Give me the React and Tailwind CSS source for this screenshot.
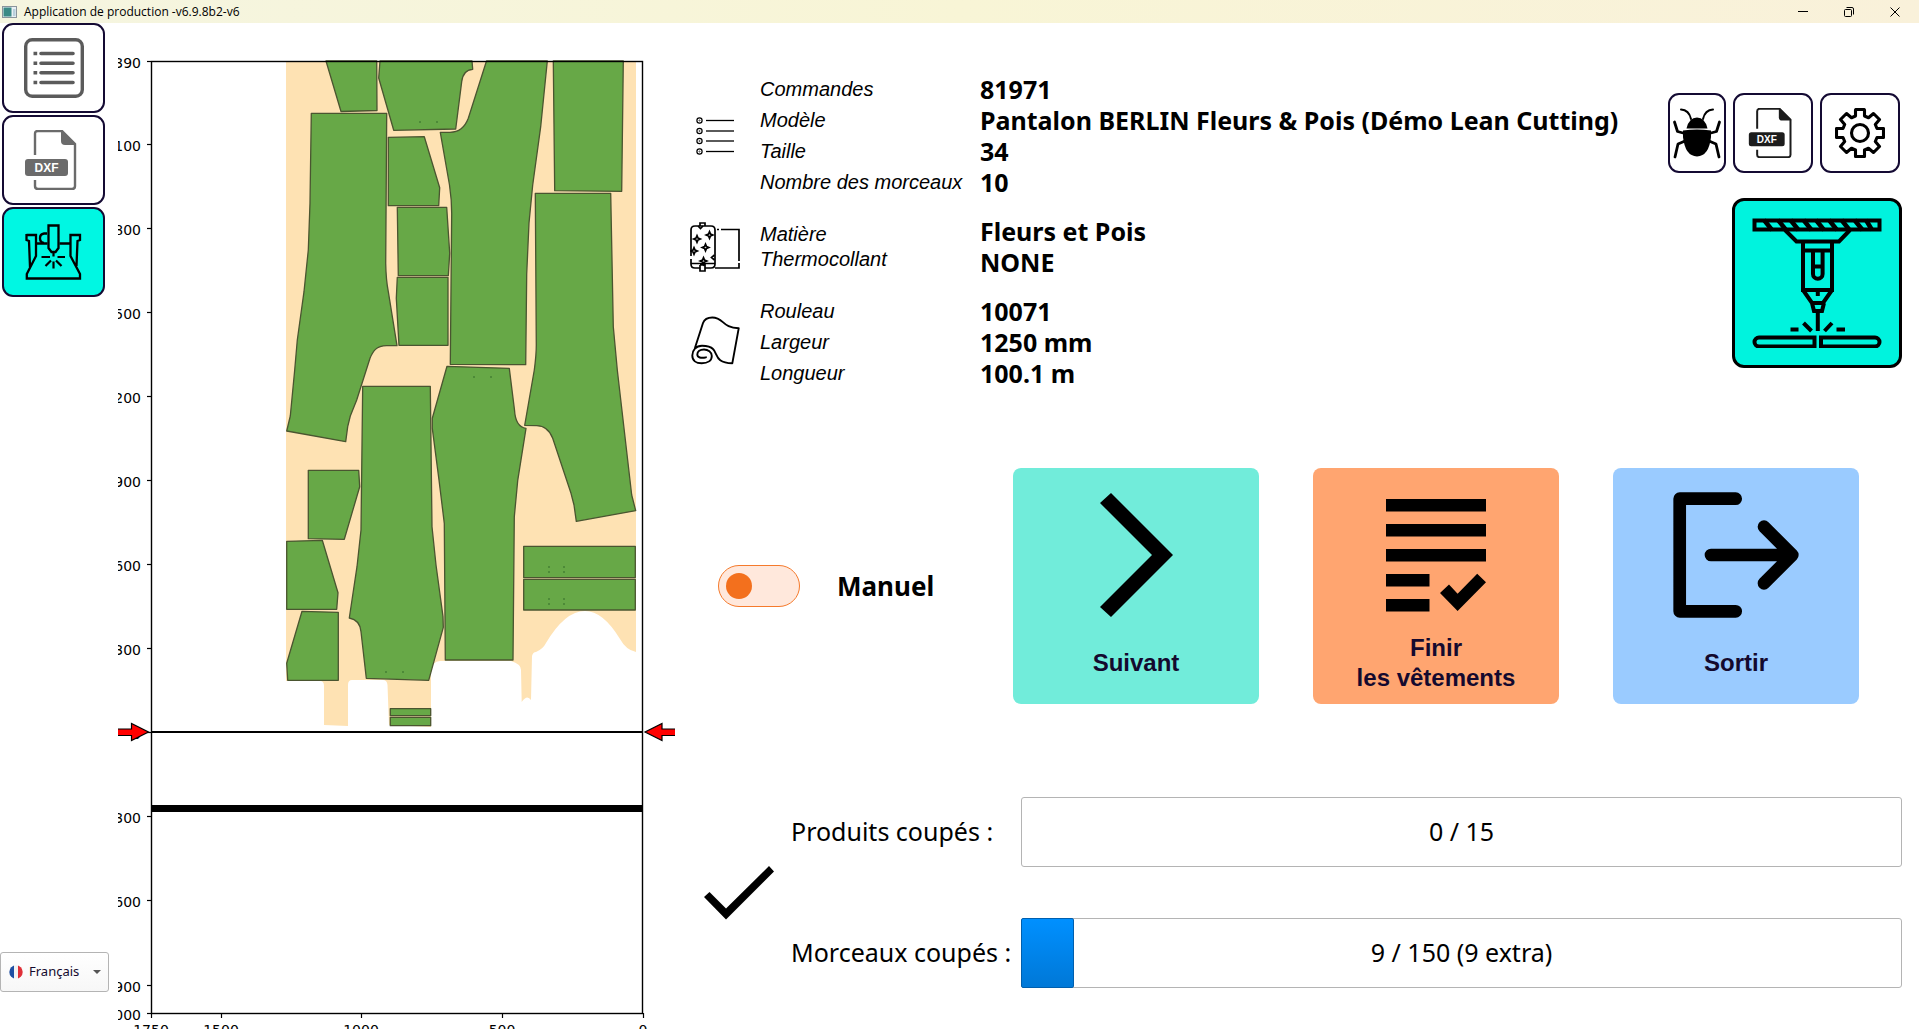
const yTicks = [
  [61, "2390"],
  [144, "2100"],
  [228, "1800"],
  [312, "1500"],
  [396, "1200"],
  [480, "900"],
  [564, "600"],
  [648, "300"],
  [732, "0"],
  [816, "-300"],
  [900, "-600"],
  [985, "-900"],
  [1013, "-1000"],
];

const xTicks = [
  [151, "1750"],
  [221, "1500"],
  [361, "1000"],
  [502, "500"],
  [643, "0"],
];

const pieces = [
  "M326 61L341 111.5L377 110.5L376.7 61Z",
  "M380 61L378.7 78L393.7 130.3L455.7 129L461.7 81.7Q463 70 472.7 69.3L472 61Z",
  "M486.5 61L468.3 118.3Q463 132.3 450 132.3H440.3L449.5 185Q451.7 200 451.7 213.3L450.3 364.3L525.7 364.7L526.7 274L529 223L532.7 185L540.7 126.7L547.3 61Z",
  "M553.3 61L554.7 190.7L621.7 191.3L623.3 61Z",
  "M311.3 113.3H386.7L385.7 263.3Q386 280 388.3 291.7L397 345.7H386.7C376 346 373 351 370 358.3L356.7 400L350.3 416L347.7 426.7L345.7 441.7L286.7 431L290.3 416L294.7 370L297.3 340L304 291.7L308.3 250L310 203Z",
  "M388.3 137.3L424.3 136.7L439.7 187.7L438.7 205.7H388.3Z",
  "M397.3 207.3H446.7L449.7 253.3L448.3 275.7H398.3Z",
  "M397.3 277.3H448V345.3H399L396.3 298.3Z",
  "M535.3 193.3H610.7L613.3 326.7L617.3 370L631.7 495L635.7 510.7L576.3 521.3L574 505L571 493.3L552.7 438.3Q548 426 536.7 425.7L524.7 425.3L534.3 370Q536.3 355 536.3 345Z",
  "M362.7 386.3H430.3L432 526.7L436 565L443 616.7L443.3 627.3L428.7 680.3L366.3 678.3L361 631.7Q360 620 349.3 618L357 566.7L361 530Z",
  "M447 366.3L509.3 368.3L514.5 410Q515.5 427 526 428.3L517.7 480.7L514.3 516.7L513 660H445.3L444.3 523.3L439 480L432.3 428.3V418.3Z",
  "M308.3 470.3H358.7L359.7 486.7L344.3 539.3L308.3 538.7Z",
  "M286.7 541.3L322.3 540.3L338 592.7L336.7 609.3H286.7Z",
  "M302 611.3L338.3 612.3V680.3H287.7L286.7 663.3Z",
  "M523.7 546.3H635.3V577.7H523.7Z",
  "M523.7 579.3H635.3V610H523.7Z",
  "M390.3 708.7H430.7V715.7H390.3Z",
  "M390.3 717.3H430.7V725.7H390.3Z",
];

const marks = [
  [419, 121], [436, 121], [473, 376], [490, 376], [385, 671], [402, 671],
  [548, 566], [563, 566], [548, 571], [563, 571],
  [548, 598], [563, 598], [548, 603], [563, 603],
];

function CuttingChart() {
  return (
    <svg
      viewBox="118 23 559 1006"
      className="w-[559px] shrink-0 self-start overflow-hidden"
      role="img"
      aria-label="Plan de coupe"
    >
      <path
        fill="#fee2b3"
        d="M286 61V681H320Q324 681 324 686V725L348 726V685Q348 680 352 680H383Q387 680 387.500 685L389 725L431 727V672Q432 661 440 661H511Q521 664 521 670L521.700 702Q527 694 531 700L532 656Q533 652 536 652Q543 649 546 643Q565 611 585 611Q603 611 620 639Q626 650 636 652V61Z"
      />
      <g fill="#67a847" stroke="#4a5530" strokeWidth="1.300" strokeLinejoin="round">
        {pieces.map((d) => (
          <path key={d} d={d} />
        ))}
      </g>
      <g fill="#4d8a38">
        {marks.map(([x, y]) => (
          <rect key={`${x}-${y}`} x={x} y={y} width="2" height="2" />
        ))}
      </g>
      <rect x="151.500" y="61.500" width="491" height="952" fill="none" stroke="#000" strokeWidth="1.400" />
      <path d="M151 732H643" stroke="#000" strokeWidth="2" />
      <path d="M151 808.500H643" stroke="#000" strokeWidth="7" />
      <g fontFamily='"DejaVu Sans", sans-serif' fontSize="14">
        {yTicks.map(([y, label]) => (
          <g key={label}>
            <path d={`M147 ${y + 0.5}H151`} stroke="#000" strokeWidth="1.200" />
            <text x="141" y={y + 7} textAnchor="end">{label}</text>
          </g>
        ))}
        {xTicks.map(([x, label]) => (
          <g key={label}>
            <path d={`M${x + 0.5} 1013V1018`} stroke="#000" strokeWidth="1.200" />
            <text x={x} y="1035" textAnchor="middle">{label}</text>
          </g>
        ))}
      </g>
      <g fill="#f00" stroke="#000" strokeWidth="1.200">
        <path d="M116 729H131.500V723.500L148.500 732L131.500 740.500V735.500H116Z" />
        <path d="M675 729H662V723.500L645 732L662 740.500V735.500H675" />
      </g>
    </svg>
  );
}

function DxfIcon({ color, className }) {
  return (
    <svg viewBox="0 0 60 60" className={className} aria-hidden="true">
      <path d="M11 25V4Q11 1 14 1H38L51 14V56Q51 59 48 59H14Q11 59 11 56V50" fill="none" stroke={color} strokeWidth="2.400" />
      <path d="M37 0V11Q37 15 41 15H52Z" fill={color} />
      <rect x="1" y="29" width="43" height="17" rx="3" fill={color} />
      <text x="22.500" y="41.500" textAnchor="middle" fontSize="12" fontWeight="700" fontFamily='"Liberation Sans", sans-serif' fill="#fff">DXF</text>
    </svg>
  );
}

function ListDocIcon() {
  return (
    <svg viewBox="0 0 60 60" className="size-[60px]" fill="none" stroke="#5b5b5b" aria-hidden="true">
      <rect x="1.700" y="1.700" width="56.600" height="56.600" rx="6.500" strokeWidth="3.400" />
      <path d="M17 15.500H49M17 25.200H49M17 34.800H49M17 44.500H49" strokeWidth="3.600" strokeLinecap="round" />
      <path d="M9.500 15.500H13.200M9.500 25.200H13.200M9.500 34.800H13.200M9.500 44.500H13.200" strokeWidth="3.600" />
    </svg>
  );
}

function CutterTableIcon() {
  return (
    <svg viewBox="0 0 60 60" className="size-[60px]" fill="none" stroke="#000" strokeWidth="2.300" aria-hidden="true">
      <path d="M2.500 13H12V34L2.800 52V56.500H56V52L46.500 34V13H56V18L53.500 19L52.500 44M2.500 12V18L5 19L6 45" />
      <path d="M12 21.500H23.500M35.500 21.500H46.500" />
      <path d="M24.500 3.500H34.500V26L31.500 30H27.500L24.500 26ZM23 11.500H20A4.700 4.700 0 0 0 20 20.800" />
      <path d="M29.500 30V34.500M17.500 35H26M33.500 35H41M29.500 39.500V46.500M21.500 44L27 38.500M32 38.500L37.500 44" strokeWidth="2.200" />
    </svg>
  );
}

function BugIcon() {
  return (
    <svg viewBox="0 0 50 52" className="h-[52px] w-[50px]" fill="none" stroke="#000" strokeWidth="2.800" strokeLinecap="round" strokeLinejoin="round" aria-hidden="true">
      <path d="M9 2.500Q17 3 19 12M41 2.500Q33 3 31 12" strokeWidth="2" />
      <path d="M2.500 15L5.500 24.500L13 26.500M47.500 15L44.500 24.500L37 26.500M3 50L6 37L13 34M47 50L44 37L37 34" />
      <path d="M14.500 21.500Q17 10.500 25 10.500Q33 10.500 35.500 21.500Z" fill="#000" stroke="none" />
      <path d="M11 23.500Q25 21.500 39 23.500V30Q37 49 25 49.500Q13 49 11 30Z" fill="#000" stroke="none" />
    </svg>
  );
}

function GearIcon() {
  return (
    <svg viewBox="0 0 50 50" className="size-[50px]" fill="none" stroke="#000" strokeWidth="3.100" strokeLinejoin="round" aria-hidden="true">
      <circle cx="25" cy="25" r="8.500" />
      <path d="M20.500 2Q20.500 1.500 21 1.500H29Q29.500 1.500 29.500 2V8L33.500 9.700L38.500 5.500L44.500 11.500L40.300 16.500L42 20.500H48.500V29.500H42L40.300 33.500L44.500 38.500L38.500 44.500L33.500 40.300L29.500 42V48.500H20.500V42L16.500 40.300L11.500 44.500L5.500 38.500L9.700 33.500L8 29.500H1.500V20.500H8L9.700 16.500L5.500 11.500L11.500 5.500L16.500 9.700L20.500 8Z" />
    </svg>
  );
}

function LaserIcon() {
  return (
    <svg viewBox="0 0 130 130" className="size-[130px]" fill="none" stroke="#000" strokeWidth="4" aria-hidden="true">
      <rect x="2.500" y="2.500" width="125" height="9" />
      <path d="M12 2L20 12M26 2L34 12M38.500 2L46.500 12M51.500 2L59.500 12M64 2L72 12M77 2L85 12M89.500 2L97.500 12M102.500 2L110.500 12M114 2L120 12" strokeWidth="4.500" />
      <path d="M33 12L44.500 23.500H87L98 12M51 24V72H80V24M51 32.500H80" />
      <path d="M61 33V56A4.800 4.800 0 0 0 70.600 56V33M61 48.500H70.600M65.800 72V78M51 72L60 85H71L80 72M60 85L62 93H70L72 85M65.800 93V113" />
      <path d="M38.500 111.500H46.500M84.500 111.500H93M51.500 105L59.500 113M80 105L72.500 113" />
      <path d="M62.500 119.500H7A4.500 4.500 0 0 0 7 128.500H62.500ZM69 119.500H123A4.500 4.500 0 0 1 123 128.500H69Z" />
    </svg>
  );
}

function ListIcon() {
  return (
    <svg viewBox="0 0 50 50" className="size-[50px]" fill="none" stroke="#000" aria-hidden="true">
      {[9.5, 20, 30, 40.5].map((y) => (
        <g key={y}>
          <circle cx="9.500" cy={y} r="2.600" strokeWidth="1.200" />
          <circle cx="9.500" cy={y} r="0.600" strokeWidth="0.600" />
          <path d={`M16 ${y}H44`} strokeWidth="1.300" />
        </g>
      ))}
    </svg>
  );
}

function FabricIcon() {
  const stars = [[7, 17], [19.5, 13], [15.5, 25.5], [4, 29], [13.5, 39]];
  return (
    <svg viewBox="0 0 50 50" className="size-[50px]" fill="none" stroke="#000" strokeWidth="1.700" aria-hidden="true">
      <path d="M10 4V1H15V4M10 43V49H15V43H10M1 34V8Q1 4 5 4H21Q25 4 25 8V42Q25 46 21 46H15M10 46H5Q1 46 1 42V37M1 41.500H25" />
      <path d="M27 7.500H29M31 7.500H49V39M49 41V46H25" />
      {stars.map(([x, y]) => (
        <path key={y} d={`M${x} ${y - 3.3}L${x + 1} ${y - 1}L${x + 3.3} ${y}L${x + 1} ${y + 1}L${x} ${y + 3.3}L${x - 1} ${y + 1}L${x - 3.3} ${y}L${x - 1} ${y - 1}Z`} />
      ))}
      <path d="M24.500 33L21.500 35.500L24.500 38M8 4L10.500 6.500L13 4" />
    </svg>
  );
}

function RollIcon() {
  return (
    <svg viewBox="0 0 50 50" className="size-[50px] overflow-visible" fill="none" stroke="#000" strokeWidth="1.900" strokeLinejoin="round" strokeLinecap="round" aria-hidden="true">
      <path d="M5 29.700L13 5Q15 -0.500 22.300 -0.500C34 -0.500 32 10 48.700 10.300L42.300 45.300C25 45 28 36 23 31Q20 27.700 12 27.700C6 27.700 2.300 32 2.300 37.500C2.300 42.500 6 45.300 11.700 45.300C18 45.300 21.800 42.500 21.800 38C21.800 34 18 31.500 14 31.500C10 31.500 7.300 33.500 7.300 36.500C7.300 39.500 11 40.500 16 39.300" />
    </svg>
  );
}

function ChevronIcon() {
  return (
    <svg viewBox="0 0 126 126" className="size-[126px]" aria-hidden="true">
      <path d="M38 1L100 63L38 125L27 115L79 63L27 11Z" />
    </svg>
  );
}

function FinishIcon() {
  return (
    <svg viewBox="0 0 126 126" className="size-[126px]" aria-hidden="true">
      <path d="M13 7H113V19.500H13ZM13 32H113V44.500H13ZM13 57H113V69.500H13ZM13 82H56.500V94.500H13ZM13 107H56.500V119.500H13Z" />
      <path d="M67 101L76 92.500L84.600 101.700L104.200 81.700L113 90.300L84.600 119Z" />
    </svg>
  );
}

function ExitIcon() {
  return (
    <svg viewBox="0 0 126 126" className="size-[126px]" fill="none" stroke="#000" strokeWidth="12.700" strokeLinecap="round" strokeLinejoin="round" aria-hidden="true">
      <path d="M62.700 6.700H6.700V119.300H62.700M38 63H119M91 34.700L119.300 63L91 91.300" />
    </svg>
  );
}

function TitleBar() {
  return (
    <header className="flex h-[23px] shrink-0 items-center bg-linear-to-r from-[#f5f5e0] via-[#f8f5d6] to-[#f9f1da] pr-px pl-[2px]">
      <svg viewBox="0 0 15 12" className="h-3 w-[15px]" aria-hidden="true">
        <rect x="0.500" y="0.500" width="14" height="11" fill="#e8f0f4" stroke="#8a949c" />
        <rect x="1.500" y="1.500" width="8" height="9" fill="#3a8a86" />
        <rect x="11" y="3" width="2.500" height="7" fill="#b9d0dc" />
      </svg>
      <h1 className='ml-[7px] font-["Open_Sans",sans-serif] text-xs leading-[23px] text-black'>Application de production -v6.9.8b2-v6</h1>
      <div className="ml-auto flex h-full">
        <button type="button" aria-label="Réduire" className="flex h-full w-[46px] items-center justify-center">
          <svg viewBox="0 0 10 10" className="size-2.5" stroke="#000" fill="none"><path d="M0 4.500H10" /></svg>
        </button>
        <button type="button" aria-label="Restaurer" className="flex h-full w-[46px] items-center justify-center">
          <svg viewBox="0 0 10 10" className="size-2.5" stroke="#000" fill="none"><rect x="0.500" y="2.500" width="7" height="7" rx="1" /><path d="M2.500 0.500H8Q9.500 0.500 9.500 2V7.500" /></svg>
        </button>
        <button type="button" aria-label="Fermer" className="flex h-full w-[46px] items-center justify-center">
          <svg viewBox="0 0 10 10" className="size-2.5" stroke="#000" fill="none"><path d="M0.500 0.500L9.500 9.500M9.500 0.500L0.500 9.500" /></svg>
        </button>
      </div>
    </header>
  );
}

function Sidebar() {
  const base = "flex h-[90px] w-[103px] items-center justify-center rounded-[11px] border-2 border-[#140a33]";
  return (
    <aside className="flex w-[118px] shrink-0 flex-col justify-between pb-[37px]">
      <nav className="flex flex-col gap-[2px] pl-[2px]">
        <button type="button" aria-label="Commandes" className={base}><ListDocIcon /></button>
        <button type="button" aria-label="Fichiers DXF" className={base}><DxfIcon color="#6b6b6b" className="size-[60px]" /></button>
        <button type="button" aria-label="Découpe" className={`${base} bg-[#00f7e3]`}><CutterTableIcon /></button>
      </nav>
      <div className="relative w-[109px]">
        <svg viewBox="0 0 14 14" className="pointer-events-none absolute top-[13px] left-[9px] size-3.5" aria-hidden="true">
          <clipPath id="flag"><circle cx="7" cy="7" r="6.700" /></clipPath>
          <g clipPath="url(#flag)">
            <rect width="14" height="14" fill="#f3f3f3" />
            <rect width="5" height="14" fill="#1f4fa3" />
            <rect x="9" width="5" height="14" fill="#e03038" />
          </g>
        </svg>
        <select aria-label="Langue" className='h-10 w-full appearance-none rounded-[3px] border border-[#b4b4b4] bg-linear-to-b from-white to-[#f7f7f7] pl-7 font-["Noto_Sans",sans-serif] text-[13px] text-[#14092e]'>
          <option>Français</option>
        </select>
        <svg viewBox="0 0 8 4" className="pointer-events-none absolute top-[18px] right-[8px] h-1 w-2" aria-hidden="true"><path d="M0 0H8L4 4Z" fill="#555" /></svg>
      </div>
    </aside>
  );
}

const groups = [
  { icon: <ListIcon />, tight: false, rows: [["Commandes", "81971"], ["Modèle", "Pantalon BERLIN Fleurs & Pois (Démo Lean Cutting)"], ["Taille", "34"], ["Nombre des morceaux", "10"]] },
  { icon: <FabricIcon />, tight: true, rows: [["Matière", "Fleurs et Pois"], ["Thermocollant", "NONE"]] },
  { icon: <RollIcon />, tight: false, rows: [["Rouleau", "10071"], ["Largeur", "1250 mm"], ["Longueur", "100.1 m"]] },
];

function InfoPanel() {
  return (
    <div className="flex flex-col gap-[18px] pt-[51px] pl-[13px]">
      {groups.map((group) => (
        <div key={group.rows[0][0]} className="flex items-center">
          <div className="w-[70px]">{group.icon}</div>
          <ul className='w-[220px] font-["Liberation_Sans",Arial,sans-serif] text-xl italic'>
            {group.rows.map(([label]) => (
              <li key={label} className={group.tight ? "leading-[25px]" : "leading-[31px]"}>{label}</li>
            ))}
          </ul>
          <ul className='font-["Noto_Sans",sans-serif] text-[25px] font-bold'>
            {group.rows.map(([label, value]) => (
              <li key={label} className="leading-[31px] whitespace-nowrap">{value}</li>
            ))}
          </ul>
        </div>
      ))}
    </div>
  );
}

function Toolbar() {
  const base = "flex h-20 items-center justify-center rounded-[11px] border-2 border-[#140a33]";
  return (
    <div className="flex flex-col items-end gap-[25px] pt-[70px] pr-[17px]">
      <div className="flex gap-[7px] pr-[2px]">
        <button type="button" aria-label="Débogage" className={`${base} w-[58px]`}><BugIcon /></button>
        <button type="button" aria-label="Importer un DXF" className={`${base} w-20`}><DxfIcon color="#1c1c1c" className="size-[50px]" /></button>
        <button type="button" aria-label="Paramètres" className={`${base} w-20`}><GearIcon /></button>
      </div>
      <button type="button" aria-label="Lancer la découpe" className="flex size-[170px] items-center justify-center rounded-xl border-[3px] border-black bg-[#00f3de]"><LaserIcon /></button>
    </div>
  );
}

function ActionCard({ className, icon, children }) {
  return (
    <button type="button" className={`flex w-[246px] flex-col items-center rounded-lg pt-6 pb-[11px] ${className}`}>
      {icon}
      <span className='mt-[15px] flex h-[60px] items-center font-["Liberation_Sans",Arial,sans-serif] text-2xl leading-[30px] font-bold text-[#14092e]'>
        <span>{children}</span>
      </span>
    </button>
  );
}

function Actions() {
  return (
    <section className="mt-[79px] flex items-center pl-[41px]">
      <label className="flex w-[295px] items-center gap-[37px]">
        <input type="checkbox" role="switch" className="h-[42px] w-[82px] appearance-none rounded-full border border-[#f57a2c] bg-[#ffe8dc] before:mt-[7px] before:ml-[7px] before:block before:size-[26px] before:rounded-full before:bg-[#f3701d] checked:before:ml-[47px]" />
        <span className='font-["Noto_Sans",sans-serif] text-[26px] font-bold'>Manuel</span>
      </label>
      <div className="flex gap-[54px]">
        <ActionCard className="bg-[#71ecda]" icon={<ChevronIcon />}>Suivant</ActionCard>
        <ActionCard className="bg-[#ffa570]" icon={<FinishIcon />}>Finir<br />les vêtements</ActionCard>
        <ActionCard className="bg-[#9acbff]" icon={<ExitIcon />}>Sortir</ActionCard>
      </div>
    </section>
  );
}

function ProgressRow({ label, value, max, text }) {
  const percent = (value / max) * 100;
  return (
    <div className='flex items-center font-["Noto_Sans",sans-serif] text-[25px]'>
      <span className="w-[230px] whitespace-nowrap">{label}</span>
      <div role="progressbar" aria-label={label} aria-valuenow={value} aria-valuemax={max} className="relative flex h-[70px] flex-1 items-center justify-center rounded-[3px] border border-[#b4b4b4] bg-white">
        {percent > 0 && (
          <div className="absolute -inset-y-px -left-px rounded-[2px] border border-[#005fae] bg-linear-to-b from-[#0090ff] to-[#0078d7]" style={{ width: `${percent}%` }} />
        )}
        <span className="relative">{text}</span>
      </div>
    </div>
  );
}

function Progress() {
  return (
    <section className="mt-[93px] flex items-center pr-[17px] pl-[27px]">
      <svg viewBox="0 0 70 54" className="h-[54px] w-[70px] shrink-0" aria-hidden="true">
        <path d="M0 31L5.500 26L22 42.500L65 0L70 5.500L22 53.500Z" />
      </svg>
      <div className="ml-[17px] flex flex-1 flex-col gap-[51px]">
        <ProgressRow label="Produits coupés :" value={0} max={15} text="0 / 15" />
        <ProgressRow label="Morceaux coupés :" value={9} max={150} text="9 / 150 (9 extra)" />
      </div>
    </section>
  );
}

export default function App() {
  return (
    <div className="flex h-screen flex-col overflow-hidden bg-white text-black">
      <TitleBar />
      <main className="flex min-h-0 flex-1">
        <Sidebar />
        <CuttingChart />
        <div className="flex min-w-0 flex-1 flex-col">
          <section className="flex items-start justify-between">
            <InfoPanel />
            <Toolbar />
          </section>
          <Actions />
          <Progress />
        </div>
      </main>
    </div>
  );
}
